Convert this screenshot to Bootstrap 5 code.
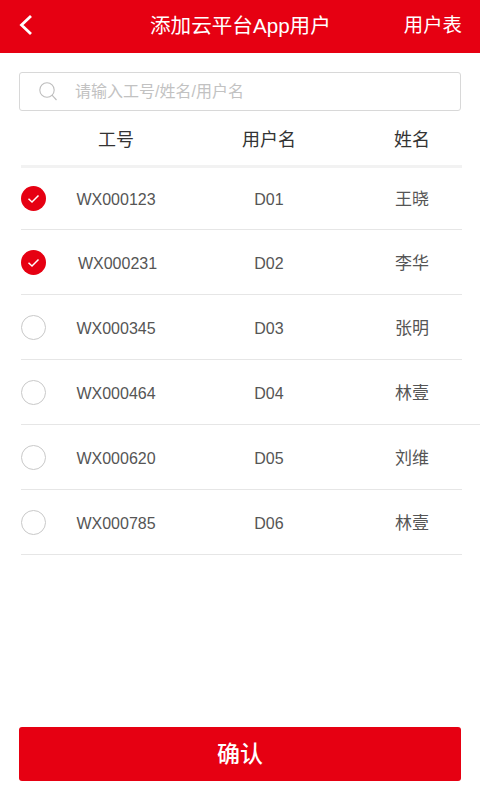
<!DOCTYPE html>
<html lang="zh">
<head>
<meta charset="utf-8">
<title>添加云平台App用户</title>
<link rel="stylesheet" href="https://cdn.jsdelivr.net/npm/bootstrap@5.3.0/dist/css/bootstrap.min.css">
<style>
html,body{height:800px;overflow:hidden}
body{font-family:"Liberation Sans","Noto Sans CJK SC",sans-serif;background:#fff;color:#555;position:relative}
.topbar{height:53px;background:#e60012;color:#fff;padding:0 18px 3px 18px;position:relative}
.topbar-title{font-size:20.6px;line-height:52px;position:absolute;left:150px;top:0}
.topbar-link{font-size:19.4px;line-height:52px;color:#fff;text-decoration:none;margin-left:auto}
.search-box{margin:19px 19px 0;height:39px;border:1px solid #d8d8d8;border-radius:3px;padding-left:19px;gap:18px}
.search-hint{font-size:16px;color:#c2c2c2}
.cols{display:grid;grid-template-columns:37px 116px 190px 96px 2px;margin-left:21px;width:441px;align-items:center;text-align:center}
.head-row{height:57px;font-size:18px;color:#333;border-bottom:3px solid #f2f2f2;padding-top:4px}
.data-row{height:65px;font-size:16px;color:#555;border-bottom:1px solid #e6e6e6}
.data-row span{padding-top:3px}
.data-row span:nth-of-type(3){font-size:17px}
.data-row.first-row{height:62px;padding-bottom:1px}
.data-row.wide{width:459px;grid-template-columns:37px 116px 190px 96px 20px}
.data-row span.nudge{padding-left:3px}
.tick{display:block;width:25px;height:25px}
.cta-wrap{position:absolute;left:19px;right:19px;top:727px}
.cta{height:54px;background:#e60012;border:0;border-radius:3px;color:#fff;font-size:23px;font-weight:500;width:100%}
.cta:hover{background:#e60012;color:#fff}
</style>
</head>
<body>
<header class="topbar d-flex align-items-center">
  <svg width="16" height="22" viewBox="0 0 16 22" aria-label="返回"><path d="M13 2 3.5 11 13 20" fill="none" stroke="#fff" stroke-width="2.8"/></svg>
  <span class="topbar-title">添加云平台App用户</span>
  <a class="topbar-link" href="#">用户表</a>
</header>
<div class="search-box d-flex align-items-center">
  <svg width="18" height="19" viewBox="0 0 18 19"><circle cx="8" cy="8" r="7.2" fill="none" stroke="#bdbdbd" stroke-width="1.1"/><path d="M13 13.2 17.5 18" fill="none" stroke="#bdbdbd" stroke-width="1.1"/></svg>
  <span class="search-hint">请输入工号/姓名/用户名</span>
</div>
<div class="cols head-row"><span></span><span>工号</span><span>用户名</span><span>姓名</span></div>
<div class="cols data-row first-row"><svg class="tick" viewBox="0 0 25 25"><circle cx="12.5" cy="12.5" r="12.5" fill="#e60012"/><path d="M7.5 12.8 11 16 17.5 9.5" fill="none" stroke="#fff" stroke-width="1.5"/></svg><span>WX000123</span><span>D01</span><span>王晓</span></div>
<div class="cols data-row"><svg class="tick" viewBox="0 0 25 25"><circle cx="12.5" cy="12.5" r="12.5" fill="#e60012"/><path d="M7.5 12.8 11 16 17.5 9.5" fill="none" stroke="#fff" stroke-width="1.5"/></svg><span class="nudge">WX000231</span><span>D02</span><span>李华</span></div>
<div class="cols data-row"><svg class="tick" viewBox="0 0 25 25"><circle cx="12.5" cy="12.5" r="12" fill="none" stroke="#c8c8c8"/></svg><span>WX000345</span><span>D03</span><span>张明</span></div>
<div class="cols data-row wide"><svg class="tick" viewBox="0 0 25 25"><circle cx="12.5" cy="12.5" r="12" fill="none" stroke="#c8c8c8"/></svg><span>WX000464</span><span>D04</span><span>林壹</span><span></span></div>
<div class="cols data-row"><svg class="tick" viewBox="0 0 25 25"><circle cx="12.5" cy="12.5" r="12" fill="none" stroke="#c8c8c8"/></svg><span>WX000620</span><span>D05</span><span>刘维</span></div>
<div class="cols data-row"><svg class="tick" viewBox="0 0 25 25"><circle cx="12.5" cy="12.5" r="12" fill="none" stroke="#c8c8c8"/></svg><span>WX000785</span><span>D06</span><span>林壹</span></div>
<div class="cta-wrap"><button class="btn cta" type="button">确认</button></div>
<script src="https://cdn.jsdelivr.net/npm/bootstrap@5.3.0/dist/js/bootstrap.bundle.min.js"></script>
</body>
</html>
